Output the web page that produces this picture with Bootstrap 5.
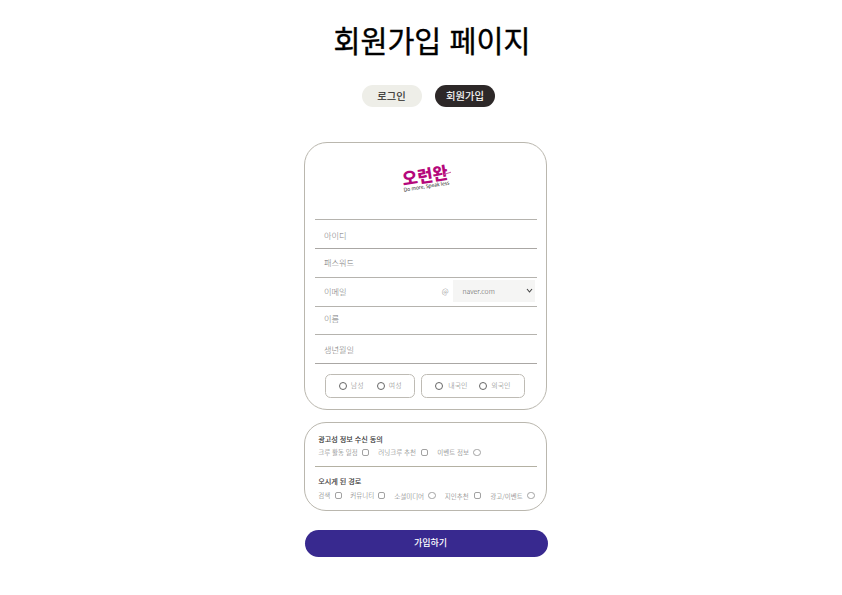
<!DOCTYPE html>
<html lang="ko">
<head>
<meta charset="utf-8">
<meta name="viewport" content="width=device-width, initial-scale=1">
<title>회원가입 페이지</title>
<link href="https://cdn.jsdelivr.net/npm/bootstrap@5.3.0/dist/css/bootstrap.min.css" rel="stylesheet">
<style>
body{font-family:"Noto Sans CJK KR",sans-serif;background:#fff;line-height:1}
.page{width:243px;margin-left:304px;padding-top:20px}
.title{font-size:29.3px;font-weight:400;line-height:38px;color:#000;margin:0 -10px 0 29.5px;-webkit-text-stroke:.4px #000}
.tabs{margin:27px 0 0 57.5px;gap:13.5px}
.tab{width:60px;height:22px;padding:0;border:0;font-size:10.3px;line-height:20px;font-weight:400;color:#2b2826;background:#eeeee8;-webkit-text-stroke:.15px}
.tab.on{background:#2d2828;color:#fff}
.panel{border:1.3px solid #bab7ae;border-radius:25px;padding:0 9.5px 0 10px;width:243px}
.p1{height:268px;margin-top:34.5px;border-radius:23px}
.p2{height:89px;margin-top:12.5px;border-radius:22px}
.logo{height:76.7px}
.field{height:28.8px;border-top:1.3px solid #b5b3ae;padding:0 0 1px 9px;font-size:8.2px;font-weight:300;color:#777}
.field.dark{border-color:#aaa7a4}
.at{font-size:7.5px;margin-left:auto;margin-right:4px}
.domain{width:82px;height:22px;background:#f5f5f4;font-size:6.8px;color:#555;padding:0 2px 0 10px;margin-right:2px}
.boxes{border-top:1.3px solid #aaa7a4;padding:9.5px 0 0 9.8px;gap:6px}
.opts{display:grid;align-items:center;height:24px;border:1.4px solid #bebbb4;border-radius:5.5px;font-size:6.9px;font-weight:300;color:#777;white-space:nowrap}
.sex{width:90.5px;grid-template-columns:12px 26px 12px 20px;padding-left:13px}
.nation{width:104px;grid-template-columns:13.5px 30.5px 12.5px 20px;padding-left:12.5px}
.ring{width:8px;height:8px;border:1px solid #666;border-radius:50%}
.head{font-size:7.1px;font-weight:400;color:#333;line-height:10px;padding-left:3.2px;-webkit-text-stroke:.15px}
.head.first{padding-top:11px}
.checks{display:grid;align-items:center;height:10px;font-size:6.5px;font-weight:300;color:#666;padding-left:3.2px;white-space:nowrap}
.c1{grid-template-columns:44px 16px 43px 16px 36px 10px;margin-top:3.5px}
.c2{grid-template-columns:17px 15px 28px 16px 34px 16.5px 29.5px 16px 37px 8px;margin-top:4.2px}
.tick{width:7px;height:7px;border:1px solid #a2a2a2;border-radius:2px}
.tick.r{width:8px;height:7.5px;border-radius:4px}
.low{padding-top:2px}
.split{border-top:1.2px solid #b4b1a3;margin-top:8.6px;padding-top:9.4px}
.join{width:243px;height:27px;margin:19px 0 0 .5px;padding:0 0 2px 9px;border:0;background:#38298f;color:#fff;font-size:9px;font-weight:500;line-height:25px}
</style>
<script src="https://cdn.jsdelivr.net/npm/bootstrap@5.3.0/dist/js/bootstrap.bundle.min.js"></script>
</head>
<body>
<main class="page">
<h1 class="title text-nowrap">회원가입 페이지</h1>
<div class="tabs d-flex">
<button class="tab rounded-pill">로그인</button>
<button class="tab on rounded-pill">회원가입</button>
</div>
<form>
<section class="panel p1">
<div class="logo">
<svg width="222" height="76" viewBox="315 143 222 76" aria-label="오런완">
<g transform="rotate(-9 403 187)">
<text x="403.5" y="185.6" font-size="17" font-weight="900" fill="#b5077b" textLength="46" lengthAdjust="spacingAndGlyphs">오런완</text>
<text x="403.3" y="191.8" font-size="5.4" font-family="Noto Sans" fill="#222" textLength="46" lengthAdjust="spacingAndGlyphs">Do more, Speak less</text>
</g>
<path d="M444 174.4l7-2.2" stroke="#c75ba3" stroke-width="1"/>
</svg>
</div>
<div class="field d-flex align-items-center pt-1">아이디</div>
<div class="field dark d-flex align-items-center"><span>패스워드</span></div>
<div class="field d-flex align-items-center"><span>이메일</span><span class="at">@</span>
<div class="domain d-flex align-items-center justify-content-between"><span>naver.com</span><svg width="7" height="6" viewBox="0 0 7 6"><path d="M1 1l2.5 3L6 1" fill="none" stroke="#444" stroke-width="1.1"/></svg></div></div>
<div class="field d-flex align-items-center"><span class="pb-1">이름</span></div>
<div class="field d-flex align-items-center pt-1 pb-0"><span class="pb-1">생년월일</span></div>
<div class="boxes d-flex">
<div class="opts sex"><i class="ring"></i><span>남성</span><i class="ring"></i><span>여성</span></div>
<div class="opts nation"><i class="ring"></i><span>내국인</span><i class="ring"></i><span>외국인</span></div>
</div>
</section>
<section class="panel p2">
<h2 class="head first m-0">광고성 정보 수신 동의</h2>
<div class="checks c1"><span>크루 활동 일정</span><i class="tick"></i><span>러닝크루 추천</span><i class="tick"></i><span>이벤트 정보</span><i class="tick r"></i></div>
<div class="split">
<h2 class="head m-0">오시게 된 경로</h2>
<div class="checks c2"><span>검색</span><i class="tick"></i><span>커뮤니티</span><i class="tick"></i><span class="low">소셜미디어</span><i class="tick r"></i><span class="low">지인추천</span><i class="tick"></i><span class="low">광고/이벤트</span><i class="tick r"></i></div>
</div>
</section>
<button type="button" class="join rounded-pill">가입하기</button>
</form>
</main>
</body>
</html>
